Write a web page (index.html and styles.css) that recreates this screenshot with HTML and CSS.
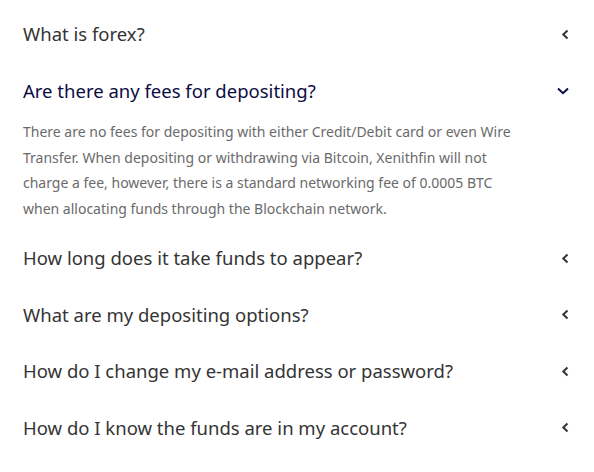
FILE: index.html
```html
<!DOCTYPE html>
<html>
<head>
	<title>FAQ</title>
	<meta charset="UTF-8">
	<meta name="viewport" content="width=device-width, initial-scale=1.0">
	<link rel="stylesheet" href="styles.css">
</head>
<body>
	<div class="faq">
		<div class="faq-item">
			<div class="faq-question">
				<span>What is forex?</span>
				<svg class="chevron" width="8" height="11" viewBox="0 0 8 11"><path d="M6.5 1.5 L2.3 5.5 L6.5 9.5" /></svg>
			</div>
		</div>

		<div class="faq-item open">
			<div class="faq-question">
				<span>Are there any fees for depositing?</span>
				<svg class="chevron" width="12" height="8" viewBox="0 0 12 8"><path d="M1 1.5 L6 6.2 L11 1.5" /></svg>
			</div>
			<div class="faq-answer">
				There are no fees for depositing with either Credit/Debit card or even Wire Transfer. When depositing or withdrawing via Bitcoin, Xenithfin will not charge a fee, however, there is a standard networking fee of 0.0005 BTC when allocating funds through the Blockchain network.
			</div>
		</div>

		<div class="faq-item">
			<div class="faq-question">
				<span>How long does it take funds to appear?</span>
				<svg class="chevron" width="8" height="11" viewBox="0 0 8 11"><path d="M6.5 1.5 L2.3 5.5 L6.5 9.5" /></svg>
			</div>
		</div>

		<div class="faq-item">
			<div class="faq-question">
				<span>What are my depositing options?</span>
				<svg class="chevron" width="8" height="11" viewBox="0 0 8 11"><path d="M6.5 1.5 L2.3 5.5 L6.5 9.5" /></svg>
			</div>
		</div>

		<div class="faq-item">
			<div class="faq-question">
				<span>How do I change my e-mail address or password?</span>
				<svg class="chevron" width="8" height="11" viewBox="0 0 8 11"><path d="M6.5 1.5 L2.3 5.5 L6.5 9.5" /></svg>
			</div>
		</div>

		<div class="faq-item">
			<div class="faq-question">
				<span>How do I know the funds are in my account?</span>
				<svg class="chevron" width="8" height="11" viewBox="0 0 8 11"><path d="M6.5 1.5 L2.3 5.5 L6.5 9.5" /></svg>
			</div>
		</div>
	</div>
</body>
</html>
```

FILE: styles.css
```css
body {
	margin: 0;
	background-color: #fff;
	font-family: 'Noto Sans', 'Open Sans', Arial, sans-serif;
}

.faq {
	padding: 6px 25px 0 23px;
}

.faq-question {
	display: flex;
	justify-content: space-between;
	align-items: center;
	padding: 15.25px 0;
	line-height: 26px;
	font-size: 18.5px;
	color: #343434;
	cursor: pointer;
}

.faq-item.open .faq-question {
	color: #0c0c44;
}

.chevron {
	fill: none;
	stroke: currentColor;
	stroke-width: 2;
}

.faq-answer {
	padding: 0 48px 8px 0;
	font-size: 14px;
	line-height: 25.7px;
	color: #6a6a6a;
}
```
